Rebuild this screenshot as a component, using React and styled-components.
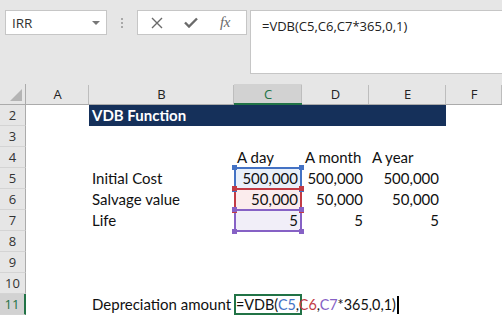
import React from 'react'
import styled, { createGlobalStyle, css } from 'styled-components'

const GlobalStyle = createGlobalStyle`
  html, body { margin: 0; padding: 0; background: #fff; }
  body { font-family: "Lato", "Liberation Sans", sans-serif; overflow: hidden; }
`

const COLS = '26px 63px 145px 68px 67px 77px 1fr'

const Toolbar = styled.div`
  display: flex;
  align-items: flex-start;
  height: 84px;
  padding: 10px 0 0 5px;
  box-sizing: border-box;
  background: #e6e6e6;
  font-family: "Open Sans", "Liberation Sans", sans-serif;
`

const NameBox = styled.div`
  width: 102px;
  height: 25px;
  box-sizing: border-box;
  border: 1px solid #c6c6c6;
  background: #fff;
  display: flex;
  align-items: center;
  justify-content: space-between;
  padding: 0 6px 0 6px;
  font-size: 13.5px;
  color: #333;
`

const Caret = styled.span`
  width: 0;
  height: 0;
  border-left: 4px solid transparent;
  border-right: 4px solid transparent;
  border-top: 4px solid #777;
`

const Grip = styled.div`
  width: 30px;
  height: 25px;
  display: flex;
  flex-direction: column;
  align-items: center;
  justify-content: center;
  gap: 2px;
  span {
    width: 2px;
    height: 2px;
    background: #a8a8a8;
  }
`

const FuncBox = styled.div`
  width: 110px;
  height: 25px;
  box-sizing: border-box;
  border: 1px solid #c6c6c6;
  background: #fff;
  display: flex;
  align-items: center;
  padding-left: 2px;
`

const IconSlot = styled.div`
  width: 34px;
  height: 100%;
  display: flex;
  align-items: center;
  justify-content: center;
  color: #6a6a6a;
`

const Fx = styled.span`
  font-family: "Liberation Serif", serif;
  font-style: italic;
  font-size: 15px;
  color: #6a6a6a;
  letter-spacing: -0.5px;
`

const FormulaBar = styled.div`
  flex: 1;
  margin-left: 3px;
  height: 64px;
  box-sizing: border-box;
  border: 1px solid #c6c6c6;
  border-right: none;
  background: #fff;
  padding: 6px 11px;
  font-size: 13px;
  color: #222;
`

const Sheet = styled.div`
  display: grid;
  grid-template-columns: ${COLS};
  grid-auto-rows: 21px;
  font-size: 15px;
  color: #111;
`

const Corner = styled.div`
  background: #e6e6e6;
  border-right: 1px solid #ababab;
  border-bottom: 1px solid #ababab;
  box-sizing: border-box;
  display: flex;
  align-items: flex-end;
  justify-content: flex-end;
  padding: 0 3px 3px 0;
`

const ColHead = styled.div`
  position: relative;
  background: ${p => (p.$active ? '#d2d2d2' : '#e6e6e6')};
  border-bottom: ${p => (p.$active ? '2px solid #217346' : '1px solid #ababab')};
  box-sizing: border-box;
  text-align: center;
  font-family: "Open Sans", "Liberation Sans", sans-serif;
  font-size: 13px;
  line-height: 20px;
  color: ${p => (p.$active ? '#217346' : '#222')};
  &::after {
    content: '';
    position: absolute;
    right: 0;
    top: 1px;
    bottom: 0;
    width: 1px;
    background: #bdbdbd;
  }
`

const RowHead = styled.div`
  background: ${p => (p.$active ? '#d2d2d2' : '#e6e6e6')};
  border-right: ${p => (p.$active ? '2px solid #217346' : '1px solid #ababab')};
  border-bottom: 1px solid #d4d4d4;
  box-sizing: border-box;
  text-align: center;
  font-family: "Open Sans", "Liberation Sans", sans-serif;
  font-size: 13px;
  line-height: 21px;
  color: ${p => (p.$active ? '#217346' : '#333')};
`

const Cell = styled.div`
  position: relative;
  box-sizing: border-box;
  padding: 0 ${p => p.$pr ?? 3}px 0 3px;
  line-height: 21px;
  white-space: nowrap;
  text-align: ${p => p.$align || 'left'};
  ${p => p.$span && css`grid-column: span ${p.$span};`}
  ${p => p.$title && css`
    background: #15305a;
    color: #fff;
    font-weight: 700;
  `}
  ${p => p.$range && css`
    background: ${p.$fill};
    &::before {
      content: '';
      position: absolute;
      top: -1px;
      left: 0;
      right: 0;
      bottom: -1px;
      border: 2px solid ${p.$range};
      pointer-events: none;
    }
  `}
`

const Handle = styled.span`
  position: absolute;
  z-index: 2;
  width: 5px;
  height: 5px;
  background: ${p => p.$color};
  ${p => (p.$x === 'left' ? 'left: -2px;' : 'right: -2px;')}
  ${p => (p.$y === 'top' ? 'top: -3px;' : 'bottom: -3px;')}
`

const EditCell = styled.div`
  position: relative;
  z-index: 3;
  box-sizing: border-box;
  border: 2px solid #217346;
  padding-left: 0;
  font-size: 14.4px;
  line-height: 17px;
  white-space: nowrap;
  overflow: visible;
`

const Ref = styled.span`
  color: ${p => p.$color};
`

const Cursor = styled.span`
  display: inline-block;
  width: 2px;
  height: 18px;
  margin-left: 1px;
  background: #000;
  vertical-align: -4px;
`

const BLUE = '#4472c4'
const RED = '#c23b45'
const PURPLE = '#8661c5'

const ranges = {
  5: { color: BLUE, fill: '#e9f0fa' },
  6: { color: RED, fill: '#fbeced' },
  7: { color: PURPLE, fill: '#f1eef8' },
}

const data = {
  4: { b: '', c: 'A day', d: 'A month', e: 'A year', text: true },
  5: { b: 'Initial Cost', c: '500,000', d: '500,000', e: '500,000' },
  6: { b: 'Salvage value', c: '50,000', d: '50,000', e: '50,000' },
  7: { b: 'Life', c: '5', d: '5', e: '5' },
}

function Handles({ color }) {
  return (
    <>
      <Handle $color={color} $x="left" $y="top" />
      <Handle $color={color} $x="right" $y="top" />
      <Handle $color={color} $x="left" $y="bottom" />
      <Handle $color={color} $x="right" $y="bottom" />
    </>
  )
}

function Row({ n }) {
  if (n === 2) {
    return (
      <>
        <RowHead>{n}</RowHead>
        <Cell />
        <Cell $span={4} $title>VDB Function</Cell>
        <Cell />
      </>
    )
  }
  if (n === 11) {
    return (
      <>
        <RowHead $active>{n}</RowHead>
        <Cell />
        <Cell>Depreciation amount</Cell>
        <EditCell>
          =VDB(<Ref $color={BLUE}>C5</Ref>,<Ref $color={RED}>C6</Ref>,<Ref $color={PURPLE}>C7</Ref>*365,0,1)
          <Cursor />
        </EditCell>
        <Cell />
        <Cell />
        <Cell />
      </>
    )
  }
  const row = data[n]
  const range = ranges[n]
  const align = row && row.text ? 'left' : 'right'
  return (
    <>
      <RowHead>{n}</RowHead>
      <Cell />
      <Cell>{row ? row.b : ''}</Cell>
      <Cell $align={align} $pr={4} $range={range && range.color} $fill={range && range.fill}>
        {row ? row.c : ''}
        {range && <Handles color={range.color} />}
      </Cell>
      <Cell $align={align} $pr={6}>{row ? row.d : ''}</Cell>
      <Cell $align={align} $pr={7}>{row ? row.e : ''}</Cell>
      <Cell />
    </>
  )
}

export default function App() {
  const rows = [2, 3, 4, 5, 6, 7, 8, 9, 10, 11]
  return (
    <>
      <GlobalStyle />
      <Toolbar>
        <NameBox>
          IRR
          <Caret />
        </NameBox>
        <Grip>
          <span />
          <span />
          <span />
        </Grip>
        <FuncBox>
          <IconSlot>
            <svg width="12" height="12" viewBox="0 0 12 12">
              <path d="M1 1 L11 11 M11 1 L1 11" stroke="currentColor" strokeWidth="1.4" fill="none" />
            </svg>
          </IconSlot>
          <IconSlot>
            <svg width="14" height="11" viewBox="0 0 14 11">
              <path d="M1 5.5 L5 9.5 L13 1.5" stroke="currentColor" strokeWidth="2.4" fill="none" />
            </svg>
          </IconSlot>
          <IconSlot>
            <Fx>fx</Fx>
          </IconSlot>
        </FuncBox>
        <FormulaBar>=VDB(C5,C6,C7*365,0,1)</FormulaBar>
      </Toolbar>
      <Sheet>
        <Corner>
          <svg width="12" height="12" viewBox="0 0 12 12">
            <path d="M12 0 L12 12 L0 12 Z" fill="#b4b4b4" />
          </svg>
        </Corner>
        {['A', 'B', 'C', 'D', 'E', 'F'].map(c => (
          <ColHead key={c} $active={c === 'C'}>{c}</ColHead>
        ))}
        {rows.map(n => (
          <Row key={n} n={n} />
        ))}
      </Sheet>
    </>
  )
}
